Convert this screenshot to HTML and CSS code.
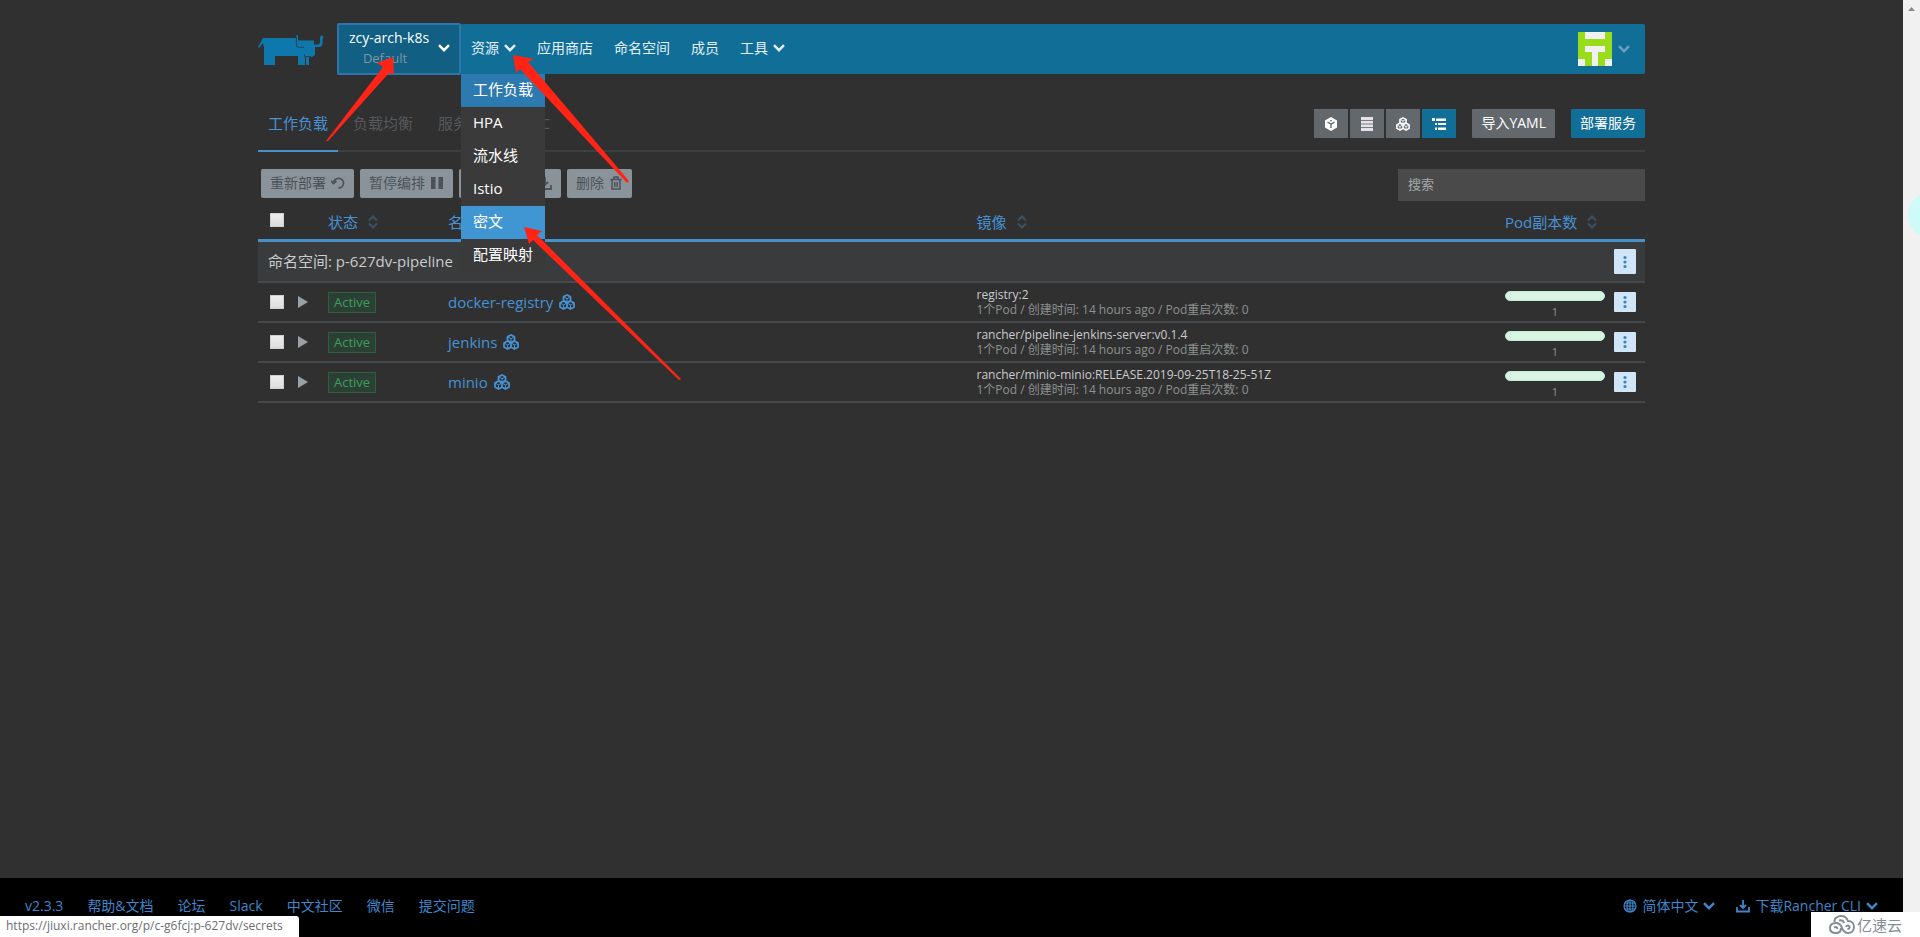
FILE: index.html
```html
<!DOCTYPE html>
<html lang="zh-CN">
<head>
<meta charset="utf-8">
<title>Rancher</title>
<link rel="stylesheet" href="styles.css">
</head>
<body>
<svg class="defs" width="0" height="0" aria-hidden="true">
  <symbol id="chev" viewBox="0 0 12 8"><path d="M1 1.2 6 6.2 11 1.2" fill="none" stroke="currentColor" stroke-width="2.4"/></symbol>
  <symbol id="sort" viewBox="0 0 10 14"><path d="M1 5.5 5 1.5 9 5.5M1 8.5 5 12.5 9 8.5" fill="none" stroke="currentColor" stroke-width="2"/></symbol>
  <symbol id="pods" viewBox="0 0 16 16"><g fill="none" stroke="currentColor"><path d="M8 1 11.500 2.800V6.500L8 8.500 4.500 6.500V2.800ZM4.500 7 8 9V13L4.500 15 1 13V9ZM11.500 7 15 9V13L11.500 15 8 13V9Z" stroke-width="1.800" stroke-linejoin="round"/><path d="M5 3 8 4.700 11 3M8 4.700V8M1.500 9.200 4.500 11 7.500 9.200M4.500 11V14.500M8.500 9.200 11.500 11 14.500 9.200M11.500 11V14.500"/></g></symbol>
  <symbol id="dots" viewBox="0 0 4 14"><g fill="currentColor"><circle cx="2" cy="2.500" r="1.600"/><circle cx="2" cy="7" r="1.600"/><circle cx="2" cy="11.500" r="1.600"/></g></symbol>
</svg>
<div class="page">
  <div class="app">
    <div class="container">
      <header class="header">
        <a class="logo" href="#" aria-label="Rancher">
          <svg width="68" height="32" viewBox="0 0 68 32"><g fill="#0e78ad"><path d="M6 4H38V11Q38 13 40 13H47V31H40V22H17V31H6V13L5 9 1 14 0 13 3 8Q4 4 6 4Z"/><path d="M38.500 1H40V5Q40 6.500 42 6.500H56V10.500H60Q62 10.500 62 7V3L64 1 65.500 3Q64.500 5 64.500 9Q64.500 13 61 13H57V21L54 23H51V31H48V23L46 21V13H40.500Q38.500 13 38.500 11Z"/></g><path d="M38.300 3V11Q38.500 13.300 41 13.300H46M46.500 20V22.500H53" fill="none" stroke="#23485a"/></svg>
        </a>
        <nav class="navbar">
          <button class="cluster" type="button">
            <span class="cluster-text"><span>zcy-arch-k8s</span><span class="cluster-sub">Default</span></span>
            <svg class="chev"><use href="#chev"/></svg>
          </button>
          <ul class="menu">
            <li class="has-menu"><a href="#">资源<svg class="chev"><use href="#chev"/></svg></a>
              <ul class="dropdown">
                <li><a class="current" href="#">工作负载</a></li>
                <li><a href="#">HPA</a></li>
                <li><a href="#">流水线</a></li>
                <li><a href="#">Istio</a></li>
                <li><a class="hovered" href="#">密文</a></li>
                <li><a href="#">配置映射</a></li>
              </ul>
            </li>
            <li><a href="#">应用商店</a></li>
            <li><a href="#">命名空间</a></li>
            <li><a href="#">成员</a></li>
            <li><a href="#">工具<svg class="chev"><use href="#chev"/></svg></a></li>
          </ul>
          <button class="user" type="button" aria-label="用户">
            <svg width="34" height="34" viewBox="0 0 5 5" shape-rendering="crispEdges"><path fill="#98dc1c" d="M0 0H5V5H0Z"/><path fill="#f0f0f0" d="M1 0H4V1H1ZM1 2H4V3H3V5H2V3H1ZM0 4H1V5H0ZM4 4H5V5H4Z"/></svg>
            <svg class="chev"><use href="#chev"/></svg>
          </button>
        </nav>
      </header>

      <section class="tabs">
        <nav class="tab-list">
          <a class="active" href="#">工作负载</a><a href="#">负载均衡</a><a href="#">服务发现</a><a href="#">PVC</a>
        </nav>
        <div class="tools">
          <div class="views">
            <button type="button" aria-label="容器"><svg width="14" height="14" viewBox="0 0 14 14"><path d="M7 0 13 3.500V10.500L7 14 1 10.500V3.500Z" fill="#fff"/><path d="M3.500 5.200 7 7 10.500 5.200M7 7V11" fill="none" stroke="#63686d" stroke-width="1.400"/><path d="M7 3 8.500 3.800 7 4.600 5.500 3.800Z" fill="#63686d"/></svg></button>
            <button type="button" aria-label="列表"><svg width="14" height="14" viewBox="0 0 14 14"><path d="M1 0H13V14H1Z" fill="#e4e2e8"/><path d="M1 3.500H13M1 7H13M1 10.500H13" stroke="#7a7e84"/></svg></button>
            <button type="button" aria-label="节点"><svg width="14" height="14"><use href="#pods"/></svg></button>
            <button class="on" type="button" aria-label="命名空间"><svg width="14" height="14" viewBox="0 0 14 14"><path d="M0 1H3V4H0ZM4 1.500H14V4H4ZM3 6H5V8H3ZM6 6H14V8H6ZM3 10.500H5V13H3ZM6 10.500H14V13H6Z" fill="#fff"/></svg></button>
          </div>
          <button class="btn grey" type="button">导入YAML</button>
          <button class="btn blue" type="button">部署服务</button>
        </div>
      </section>

      <section class="bulk">
        <div class="bulk-actions">
          <button type="button">重新部署<svg width="14" height="14" viewBox="0 0 14 14"><path d="M2.500 7A5 4.800 0 1 1 7.500 12M0 5 2.500 7.500 5.500 5" fill="none" stroke="currentColor" stroke-width="1.800"/></svg></button>
          <button type="button">暂停编排<svg width="14" height="14" viewBox="0 0 14 14"><path d="M1 1H5.500V13H1ZM8.500 1H13V13H8.500Z" fill="currentColor"/></svg></button>
          <button class="wide" type="button">下载YAML<svg width="14" height="14" viewBox="0 0 14 14"><path d="M7 1V9M4 6 7 9 10 6M1 9V13H13V9" fill="none" stroke="currentColor" stroke-width="1.800"/></svg></button>
          <button type="button">删除<svg width="14" height="14" viewBox="0 0 14 14"><path d="M1.500 3.500H12.500M5 3V1H9V3M3 4V13H11V4M5.800 6V11M8.200 6V11" fill="none" stroke="currentColor" stroke-width="1.500"/></svg></button>
        </div>
        <input class="search" type="search" placeholder="搜索" aria-label="搜索">
      </section>

      <table class="grid">
        <colgroup><col class="c-check"><col class="c-arrow"><col class="c-state"><col><col><col class="c-pod"><col class="c-act"></colgroup>
        <thead>
          <tr>
            <th><input type="checkbox" aria-label="全选"></th><th></th>
            <th><a href="#">状态<svg class="sort"><use href="#sort"/></svg></a></th>
            <th><a href="#">名称<svg class="sort"><use href="#sort"/></svg></a></th>
            <th><a href="#">镜像<svg class="sort"><use href="#sort"/></svg></a></th>
            <th colspan="2"><a href="#">Pod副本数<svg class="sort"><use href="#sort"/></svg></a></th>
          </tr>
        </thead>
        <tbody>
          <tr class="group">
            <td colspan="6">命名空间: p-627dv-pipeline</td>
            <td><button class="more" type="button" aria-label="操作"><svg width="4" height="14"><use href="#dots"/></svg></button></td>
          </tr>
          <tr>
            <td><input type="checkbox" aria-label="docker-registry"></td>
            <td><button class="expand" type="button" aria-label="展开"></button></td>
            <td><span class="badge">Active</span></td>
            <td><a class="name" href="#">docker-registry<svg width="16" height="16"><use href="#pods"/></svg></a></td>
            <td class="image"><div>registry:2</div><div class="meta">1个Pod / 创建时间: 14 hours ago / Pod重启次数: 0</div></td>
            <td class="pod"><div class="bar"></div><div>1</div></td>
            <td><button class="more" type="button" aria-label="操作"><svg width="4" height="14"><use href="#dots"/></svg></button></td>
          </tr>
          <tr>
            <td><input type="checkbox" aria-label="jenkins"></td>
            <td><button class="expand" type="button" aria-label="展开"></button></td>
            <td><span class="badge">Active</span></td>
            <td><a class="name" href="#">jenkins<svg width="16" height="16"><use href="#pods"/></svg></a></td>
            <td class="image"><div>rancher/pipeline-jenkins-server:v0.1.4</div><div class="meta">1个Pod / 创建时间: 14 hours ago / Pod重启次数: 0</div></td>
            <td class="pod"><div class="bar"></div><div>1</div></td>
            <td><button class="more" type="button" aria-label="操作"><svg width="4" height="14"><use href="#dots"/></svg></button></td>
          </tr>
          <tr>
            <td><input type="checkbox" aria-label="minio"></td>
            <td><button class="expand" type="button" aria-label="展开"></button></td>
            <td><span class="badge">Active</span></td>
            <td><a class="name" href="#">minio<svg width="16" height="16"><use href="#pods"/></svg></a></td>
            <td class="image"><div>rancher/minio-minio:RELEASE.2019-09-25T18-25-51Z</div><div class="meta">1个Pod / 创建时间: 14 hours ago / Pod重启次数: 0</div></td>
            <td class="pod"><div class="bar"></div><div>1</div></td>
            <td><button class="more" type="button" aria-label="操作"><svg width="4" height="14"><use href="#dots"/></svg></button></td>
          </tr>
        </tbody>
      </table>
    </div>

    <footer class="footer">
      <nav class="links">
        <a href="#">v2.3.3</a><a href="#">帮助&amp;文档</a><a href="#">论坛</a><a href="#">Slack</a><a href="#">中文社区</a><a href="#">微信</a><a href="#">提交问题</a>
      </nav>
      <nav class="links right">
        <a href="#"><svg width="14" height="14" viewBox="0 0 14 14"><g fill="none" stroke="currentColor" stroke-width="1.200"><circle cx="7" cy="7" r="6"/><ellipse cx="7" cy="7" rx="3" ry="6"/><path d="M1 7H13M7 1V13M2 4H12M2 10H12"/></g></svg>简体中文<svg class="chev"><use href="#chev"/></svg></a>
        <a href="#"><svg width="14" height="14" viewBox="0 0 14 14"><path d="M7 1V9M4 6 7 9 10 6M1 8V12.500H13V8" fill="none" stroke="currentColor" stroke-width="1.800"/></svg>下载Rancher CLI<svg class="chev"><use href="#chev"/></svg></a>
      </nav>
    </footer>
  </div>
  <aside class="scroll"><svg width="17" height="17" viewBox="0 0 17 17"><path d="M5 11 8.500 7 12 11Z" fill="#8b8b8b"/></svg><span class="bubble"></span></aside>

  <div class="status">https://jiuxi.rancher.org/p/c-g6fcj:p-627dv/secrets</div>
  <div class="mark">
    <svg width="26" height="19" viewBox="0 0 26 19"><g fill="none" stroke="#858b96" stroke-width="2"><path d="M5.500 7C5 3 9 1 12 1C16 1 18 3 19 6C23 6 25 9 25 12C25 16 22 18 19 18C15 18 14 15 13 13C12 10 10 8 7 8C3 8 1 10 1 13C1 16 3 18 7 18C10 18 12 16 12 13"/><path d="M5 12.500Q8 11 8.500 14M17 12Q18 9.500 20.500 11.500Q21 14 18.500 14M10 5.500Q14 4.500 15 8"/></g></svg>亿速云
  </div>
  <svg class="arrows" width="700" height="400" viewBox="0 0 700 400" aria-hidden="true"><g fill="#ff2416"><path d="M393 57 377 63 383 67 326 141 328 141 389 73 394 74Z"/><path d="M513 55 516 73 520 69 627 183 629 181 528 62 534 59Z"/><path d="M524 227 529 244 533 240 679 380 681 379 537 235 542 231Z"/></g></svg>
</div>
</body>
</html>
```

FILE: styles.css
```css
* { box-sizing: border-box; }
body {
  margin: 0;
  background: #303030;
  color: #c9cbcd;
  font: 14px/20px "Open Sans", "Noto Sans CJK SC", sans-serif;
}
a { color: inherit; text-decoration: none; }
button { font: inherit; color: inherit; border: 0; padding: 0; background: none; }
ul { list-style: none; margin: 0; padding: 0; }
svg { flex: none; }
input[type="checkbox"] {
  appearance: none;
  display: block;
  width: 14px;
  height: 14px;
  margin: 0 0 0 12px;
  background: linear-gradient(#eee, #dcdcdc);
  border: 1px solid #d0d0d0;
}
.defs { position: absolute; }
.chev { width: 12px; height: 8px; }
.page { position: relative; display: flex; min-height: 100vh; overflow: hidden; }
.app { flex: 1; display: flex; flex-direction: column; }
.container { flex: 1; width: 100%; max-width: 1387px; margin: 0 auto; padding-top: 24px; }

.header { display: flex; height: 50px; }
.logo { width: 79px; padding-top: 10px; }
.navbar {
  flex: 1;
  display: flex;
  align-items: center;
  background: #116e96;
  border-radius: 2px;
  color: #e4f0f8;
}
.cluster {
  display: flex;
  align-items: center;
  gap: 8px;
  height: 52px;
  width: 124px;
  padding: 0 9px 2px;
  background: #115f83;
  border: 2px solid #2f75ad;
  border-radius: 2px;
  color: #fff;
}
.cluster-text { display: flex; flex-direction: column; flex: 1; }
.cluster-sub { padding-right: 8px; color: #7f97a6; font-size: 13px; }
.menu { flex: 1; display: flex; align-items: center; gap: 21px; padding-left: 10px; }
.menu > li > a { display: flex; align-items: center; gap: 5px; padding-bottom: 2px; line-height: 48px; }
.has-menu { position: relative; }
.dropdown {
  position: absolute;
  z-index: 5;
  left: -10px;
  top: 50px;
  width: 84px;
  background: #3a3a3b;
  color: #fff;
  font-size: 15px;
  line-height: 31px;
}
.dropdown a { display: block; padding: 0 0 2px 12px; }
.dropdown .current { background: #2d7ab0; }
.dropdown .hovered { background: #4096d2; }
.user { display: flex; align-items: center; gap: 6px; padding-right: 15px; }
.user .chev { color: #6ba0bd; }

.tabs {
  display: flex;
  justify-content: space-between;
  align-items: flex-end;
  height: 78px;
  border-bottom: 2px solid #3f3f40;
}
.tab-list { display: flex; gap: 5px; margin-bottom: -2px; font-size: 15px; color: #56595c; }
.tab-list a { height: 43px; padding: 4px 10px 0; border-bottom: 2px solid transparent; }
.tab-list .active { color: #4692d4; border-color: #4692c8; }
.tools { display: flex; gap: 16px; padding-bottom: 12px; }
.views { display: flex; gap: 2px; }
.views button {
  display: flex;
  align-items: center;
  justify-content: center;
  width: 34px;
  height: 29px;
  background: #63686d;
  color: #fff;
}
.views .on { background: #116e96; }
.btn { height: 29px; padding: 0 9px 2px; border-radius: 1px; color: #fff; }
.grey { background: #63686d; }
.blue { background: #116e96; }

.bulk { display: flex; justify-content: space-between; padding: 17px 0 0 3px; }
.bulk-actions { display: flex; gap: 6px; }
.bulk-actions button {
  display: flex;
  align-items: center;
  justify-content: center;
  gap: 5px;
  height: 29px;
  padding: 0 9px 2px;
  background: #8b939a;
  border-radius: 2px;
  color: #4b5258;
}
.bulk-actions .wide { width: 102px; }
.search {
  width: 247px;
  height: 32px;
  padding: 0 10px 2px;
  border: 0;
  background: #4a4a4a;
  color: #d0d2d4;
  font: 13px "Open Sans", "Noto Sans CJK SC", sans-serif;
}
.search::placeholder { color: #a4a9ab; }

.grid { width: 100%; table-layout: fixed; border-spacing: 0; }
.c-check { width: 40px; }
.c-arrow { width: 30px; }
.c-state { width: 120px; }
.c-pod { width: 109px; }
.c-act { width: 31px; }
.grid td, .grid th { padding: 0; border-bottom: 2px solid #46494c; text-align: left; }
.grid th {
  height: 41px;
  border-bottom: 3px solid #4692c8;
  color: #4692d4;
  font-weight: 400;
  font-size: 15px;
}
.grid th a { display: flex; align-items: center; gap: 10px; padding-top: 4px; }
.grid td { height: 40px; }
.sort { width: 10px; height: 14px; color: #3d5165; }
.grid .group td { height: 41px; background: #3a3b3c; font-size: 15px; }
.grid .group td:first-child { padding: 0 0 2px 10px; }
.expand {
  display: block;
  border-left: 10px solid #9aa0a5;
  border-top: 6px solid transparent;
  border-bottom: 6px solid transparent;
}
.badge {
  display: inline-block;
  padding: 0 5px;
  background: #2c3f35;
  border: 1px solid #2d5f41;
  color: #3a9f5c;
  font-size: 13px;
  line-height: 19px;
}
.name { display: flex; align-items: center; gap: 6px; padding-bottom: 1px; color: #4692d4; font-size: 15px; }
.image { font-size: 12px; line-height: 15px; }
.image .meta { color: #8d9091; }
.pod { font-size: 11px; line-height: 15px; text-align: center; color: #8d9091; }
.bar { width: 100px; height: 10px; margin-top: 5px; border-radius: 5px; background: #d8f5e3; border: 1px solid #bfeccf; }
.pod div + div { width: 100px; text-align: center; padding-top: 3px; }
.more {
  display: flex;
  align-items: center;
  justify-content: center;
  width: 22px;
  height: 20px;
  background: #d0e5f7;
  border-radius: 1px;
  color: #3a83c0;
}
.group .more { height: 25px; }

.footer {
  display: flex;
  justify-content: space-between;
  height: 59px;
  padding: 18px 25px 0;
  background: #000;
  color: #3f86cc;
}
.links { display: flex; gap: 24px; }
.links a { display: flex; align-items: center; gap: 5px; height: 20px; }
.links.right { gap: 21px; }

.scroll { position: relative; width: 17px; background: #f1f1f1; }
.bubble {
  position: absolute;
  top: 192px;
  left: 5px;
  width: 46px;
  height: 46px;
  border-radius: 23px;
  background: #ccfbf8;
}
.status {
  position: absolute;
  left: 0;
  bottom: 0;
  min-width: 299px;
  height: 21px;
  padding: 0 6px;
  background: #fff;
  border-top-right-radius: 3px;
  color: #6b6e71;
  font-size: 12px;
}
.mark {
  position: absolute;
  right: 0;
  bottom: 0;
  display: flex;
  align-items: center;
  gap: 2px;
  width: 109px;
  height: 25px;
  padding-left: 18px;
  background: #fff;
  color: #858b96;
  font-size: 15px;
  white-space: nowrap;
}
.arrows { position: absolute; left: 0; top: 0; z-index: 10; pointer-events: none; }
```
